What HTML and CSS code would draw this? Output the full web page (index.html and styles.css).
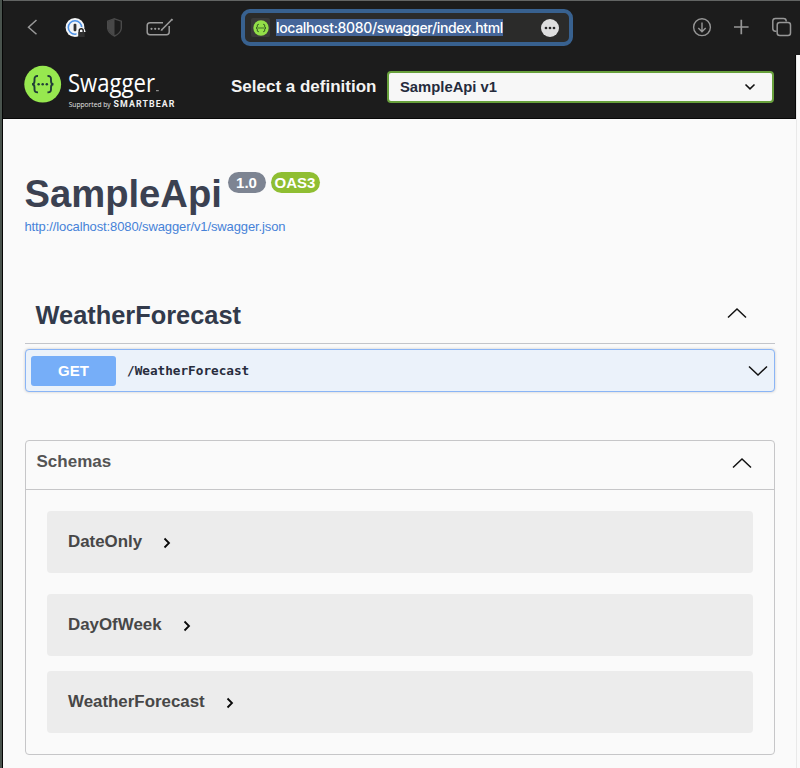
FILE: index.html
```html
<!DOCTYPE html>
<html lang="en">
<head>
<meta charset="utf-8">
<title>SampleApi</title>
<link rel="stylesheet" href="styles.css">
</head>
<body>
<div class="window">
  <div class="chrome">
    <svg class="tools-left" width="180" height="54" viewBox="3 0 180 54" fill="none">
      <path d="M36.500 20L28.500 27.200L36.500 34.300" stroke="#999" stroke-width="1.500"/>
      <circle cx="75" cy="27.500" r="9.400" fill="#f3f5f7"/>
      <circle cx="75" cy="27.500" r="6.700" stroke="#4c91e6" stroke-width="1.600"/>
      <rect x="73.600" y="23.800" width="2.800" height="7.500" rx="1" fill="#333"/>
      <path d="M76.500 37v-5.500q1-4.500 4.500-4.500t4.500 4.500V32h-2z" fill="#f3f5f7"/>
      <path d="M79.200 32v-1.200a2 2 0 0 1 4 0V32" stroke="#1c1c1c" stroke-width="1.400"/>
      <rect x="78.200" y="32" width="6.500" height="5" fill="#303030"/>
      <path d="M114.500 18.800L121.300 21.200V28.500Q120.500 33.500 114.500 36Q108.500 33.500 107.700 28.500V21.200Z" stroke="#4a4a4a" stroke-width="1.400"/>
      <path d="M114.500 19L108 21.500V28.500Q109 33.500 114.500 35.700Z" fill="#484848"/>
      <path d="M163 22.700H150Q147.200 22.700 147.200 25.500V32Q147.200 34.700 150 34.700H166.500Q169.200 34.700 169.200 32V26" stroke="#9b9b9b" stroke-width="1.500"/>
      <path d="M161.500 30L171.500 20" stroke="#9b9b9b" stroke-width="1.600"/>
      <path d="M160.600 31l.7-2.200 1.500 1.500z" fill="#9b9b9b"/>
      <g fill="#9b9b9b"><circle cx="151.500" cy="28.800" r="1.100"/><circle cx="155.200" cy="28.800" r="1.100"/><circle cx="158.800" cy="28.800" r="1.100"/></g>
      <path d="M171.300 20.300l1.200-1.200" stroke="#9b9b9b" stroke-width="2"/>
    </svg>
    <div class="address">
      <span class="favicon">
        <svg width="16" height="16" viewBox="0 0 56 56"><circle cx="28" cy="28" r="27" fill="#93df48"/><g fill="none" stroke="#24451c" stroke-width="3.500"><path d="M20 15q-5 0-5 5v3q0 5-4 5q4 0 4 5v3q0 5 5 5M36 15q5 0 5 5v3q0 5 4 5q-4 0-4 5v3q0 5-5 5"/></g><g fill="#24451c"><circle cx="21" cy="28" r="2.400"/><circle cx="28" cy="28" r="2.400"/><circle cx="35" cy="28" r="2.400"/></g></svg>
      </span>
      <span class="url">localhost:8080/swagger/index.html</span>
      <svg class="more" width="18" height="18" viewBox="0 0 18 18"><circle cx="9" cy="9" r="9" fill="#dedede"/><g fill="#282828"><circle cx="5" cy="9" r="1.350"/><circle cx="9" cy="9" r="1.350"/><circle cx="13" cy="9" r="1.350"/></g></svg>
    </div>
    <svg class="tools-right" width="110" height="54" viewBox="690 0 110 54" fill="none" stroke="#969696" stroke-width="1.400">
      <circle cx="702" cy="27.200" r="8.400"/>
      <path d="M702 22.500V31.500M698.300 28L702 31.700L705.700 28"/>
      <path d="M741.300 19.700V34.300M734 27H748.600" stroke-width="1.700"/>
      <rect x="777.200" y="22.500" width="13.300" height="13" rx="2.500" stroke-width="1.500"/>
      <path d="M776.500 31.200H775.500Q772.800 31.200 772.800 28.500V21Q772.800 18.400 775.500 18.400H783.500Q786.200 18.400 786.200 21V21.500" stroke-width="1.500"/>
    </svg>
  </div>
  <div class="viewport">
    <div class="page">
      <header class="topbar">
        <svg class="logo" width="160" height="48" viewBox="24 64 160 48">
          <circle cx="42.700" cy="84.200" r="18.400" fill="#97e84f"/>
          <g fill="none" stroke="#203c38" stroke-width="1.900"><path d="M38 76Q34.500 75.700 34.500 79V81Q34.500 84.200 32 84.200Q34.500 84.200 34.500 87.400V89.500Q34.500 92.600 38 92.300M47.500 76Q51 75.700 51 79V81Q51 84.200 53.500 84.200Q51 84.200 51 87.400V89.500Q51 92.600 47.500 92.300"/></g>
          <g fill="#203c38"><circle cx="38.600" cy="84.200" r="1.250"/><circle cx="42.700" cy="84.200" r="1.250"/><circle cx="46.800" cy="84.200" r="1.250"/></g>
          <text class="logo-name" x="68" y="92" textLength="87" lengthAdjust="spacingAndGlyphs">Swagger</text>
          <rect x="156" y="90.200" width="2.800" height="1" fill="#aaa"/>
          <text class="logo-by" x="68.700" y="106.700" textLength="42" lengthAdjust="spacingAndGlyphs">Supported by</text>
          <text class="logo-brand" x="113.500" y="106.900" textLength="61">SMARTBEAR</text>
        </svg>
        <span class="select-label">Select a definition</span>
        <div class="select"><span>SampleApi v1</span><svg width="12" height="8" viewBox="0 0 12 8" fill="none" stroke="#111" stroke-width="1.600"><path d="M1.500 1.500L6 5.800L10.500 1.500"/></svg></div>
      </header>
      <main class="content">
        <div class="title-row"><h1>SampleApi</h1><span class="badge version">1.0</span><span class="badge oas">OAS3</span></div>
        <a class="spec-link">http://localhost:8080/swagger/v1/swagger.json</a>
        <div class="tag"><h2>WeatherForecast</h2><svg width="20" height="12" viewBox="0 0 20 12" class="arrow"><path d="M1 10.500L10 2L19 10.500"/></svg></div>
        <div class="operation"><span class="method">GET</span><span class="path">/WeatherForecast</span><svg width="20" height="12" viewBox="0 0 20 12" class="arrow"><path d="M1 1.500L10 10L19 1.500"/></svg></div>
        <section class="schemas">
          <div class="schemas-head"><h3>Schemas</h3><svg width="20" height="12" viewBox="0 0 20 12" class="arrow"><path d="M1 10.500L10 2L19 10.500"/></svg></div>
          <div class="models">
            <div class="model"><span>DateOnly</span><svg width="8" height="12" viewBox="0 0 8 12" class="chevron"><path d="M1.500 1.500L6 6L1.500 10.500"/></svg></div>
            <div class="model"><span>DayOfWeek</span><svg width="8" height="12" viewBox="0 0 8 12" class="chevron"><path d="M1.500 1.500L6 6L1.500 10.500"/></svg></div>
            <div class="model last"><span>WeatherForecast</span><svg width="8" height="12" viewBox="0 0 8 12" class="chevron"><path d="M1.500 1.500L6 6L1.500 10.500"/></svg></div>
          </div>
        </section>
      </main>
    </div>
    <div class="scrollbar"></div>
  </div>
</div>
</body>
</html>
```
FILE: styles.css
```css
* { box-sizing: border-box; }
body { margin: 0; background: #1c1c1c; font-family: "Liberation Sans", Arial, sans-serif; }
h1, h2, h3 { margin: 0; }
svg { display: block; flex: none; }
.window { width: 800px; height: 768px; overflow: hidden; border-left: 3px solid #0b0d0c; border-image: linear-gradient(90deg, #49534d 0 2px, #050505 2px 3px) 0 0 0 3; }
.chrome { height: 55px; background: #1c1c1c; border-top: 1px solid #626463; display: flex; }
.tools-left { margin-top: -1px; }
.address { margin: 8px 0 0 58px; width: 332px; height: 37px; border: 4px solid #38618f; border-radius: 9px; background: #2b2b2a; display: flex; align-items: center; }
.favicon { width: 19px; height: 19px; margin-left: 6px; background: #3a3a39; border-radius: 2px; display: flex; align-items: center; justify-content: center; }
.url { margin-left: 6px; width: 227px; height: 17px; background: #45669a; color: #fff; font: 500 14px/17px Inter, sans-serif; letter-spacing: -.35px; white-space: nowrap; }
.more { margin-left: 38px; }
.tools-right { margin: -1px 0 0 117px; }
.viewport { height: 713px; display: flex; }
.page { width: 793px; background: #fafafa; }
.scrollbar { width: 4px; background: #fafafa; border-left: 1px solid #e9e9e9; }
.topbar { height: 64px; background: #1c1c1c; border-bottom: 1px solid #080808; border-right: 1px solid #080808; display: flex; padding-left: 21px; }
.logo { margin-top: 9px; }
.logo-name { font: 400 25px "Open Sans", sans-serif; fill: #fff; }
.logo-by { font: 400 7px "Open Sans", sans-serif; fill: #e6e6e6; }
.logo-brand { font: 700 8.800px Roboto, sans-serif; fill: #f0f0f0; }
.select-label { width: 157px; margin: 22px 0 0 47px; color: #f3f3f3; font: 700 17px/20px "Liberation Sans", Arial, sans-serif; white-space: nowrap; }
.select { width: 387px; height: 32px; margin: 16px 0 0 -1px; padding: 0 16px 0 11px; border: 2px solid #68a03c; border-radius: 4px; background: #f7f7f7; color: #252b3c; font-size: 14.800px; font-weight: 700; display: flex; align-items: center; justify-content: space-between; }
.content { margin: 0 21.500px 0 21.500px; }
.title-row { height: 99px; padding-top: 53px; display: flex; align-items: flex-start; }
h1 { width: 203px; font-size: 38.200px; line-height: 44px; color: #3b4151; }
.badge { height: 21px; border-radius: 11px; color: #fff; font-size: 15px; line-height: 22px; font-weight: 700; text-align: center; white-space: nowrap; }
.version { width: 38px; background: #7d8492; }
.oas { width: 49px; margin-left: 5px; background: #8fbe32; }
.spec-link { display: block; height: 16px; color: #4682d8; font-size: 13px; letter-spacing: -.11px; line-height: 17px; white-space: nowrap; }
.tag { height: 59px; margin-top: 51px; border-bottom: 1px solid #c3c5ca; display: flex; justify-content: space-between; padding: 0 28px 0 11px; }
h2 { font-size: 25.400px; line-height: 30px; color: #323a4b; margin-top: 15px; }
.tag .arrow { margin-top: 22px; }
.arrow { fill: none; stroke: #111; stroke-width: 1.500px; }
.operation { height: 43px; margin-top: 5px; border: 1.500px solid #8ab5f6; border-radius: 4px; background: #ebf2fa; box-shadow: 0 0 3px #0003; display: flex; align-items: center; padding: 0 6px 0 5.500px; }
.method { width: 85px; height: 30px; border-radius: 3px; background: #76aef8; color: #fff; font-size: 15px; line-height: 30px; font-weight: 700; text-align: center; }
.path { margin-left: 11px; flex: 1; color: #282d3d; font: 700 12.700px/16px "DejaVu Sans Mono", monospace; }
.schemas { height: 315px; margin-top: 48px; border: 1px solid #c6c6c8; border-radius: 4px; }
.schemas-head { height: 49px; border-bottom: 1px solid #c6c6c8; display: flex; justify-content: space-between; padding: 0 22px 0 11px; }
h3 { font-size: 17px; line-height: 20px; color: #545454; margin-top: 11px; }
.schemas-head .arrow { margin-top: 16px; }
.models { padding: 21px 21px 0; }
.model { height: 62px; margin-bottom: 21px; border-radius: 4px; background: #ececec; color: #474747; font-size: 16.900px; font-weight: 700; display: flex; align-items: center; padding: 0 0 0 21.500px; }
.model:nth-child(2) { margin-bottom: 15px; }
.chevron { margin: 2px 0 0 21px; fill: none; stroke: #080808; stroke-width: 1.800px; }
```
